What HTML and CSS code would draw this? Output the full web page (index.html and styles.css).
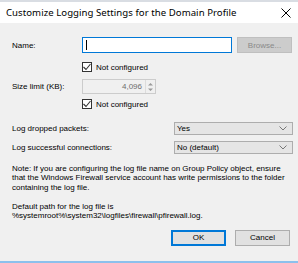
FILE: index.html
```html
<!DOCTYPE html>
<html lang="en">
<head>
    <meta charset="UTF-8">
    <title>Customize Logging Settings</title>
    <link rel="stylesheet" href="styles.css">
</head>
<body>
    <div class="window">
        <div class="top-strip"></div>
        <div class="titlebar">
            <span class="title">Customize Logging Settings for the Domain Profile</span>
            <svg class="close" width="10" height="10" viewBox="0 0 10 10">
                <path d="M0.5 0.5 L9.5 9.5 M9.5 0.5 L0.5 9.5" stroke="#000" stroke-width="1" fill="none"/>
            </svg>
        </div>

        <div class="dialog">
            <!-- Name -->
            <div class="row row-name">
                <label class="label">Name:</label>
                <div class="textbox focused"><span class="caret"></span></div>
                <button class="btn disabled">Browse...</button>
            </div>
            <div class="row row-check">
                <span class="check">
                    <svg width="8" height="8" viewBox="0 0 8 8"><path d="M0.5 4 L3 6.5 L7.5 1" stroke="#333" stroke-width="1.1" fill="none"/></svg>
                </span>
                <span>Not configured</span>
            </div>

            <!-- Size limit -->
            <div class="row row-size">
                <label class="label">Size limit (KB):</label>
                <div class="spinbox">
                    <span class="spin-value">4,096</span>
                    <span class="spin-arrows">
                        <svg width="7" height="12" viewBox="0 0 7 12">
                            <path d="M1 4.5 L3.5 2 L6 4.5 Z M1 7.5 L3.5 10 L6 7.5 Z" fill="#9a9a9a"/>
                        </svg>
                    </span>
                </div>
            </div>
            <div class="row row-check check-two">
                <span class="check">
                    <svg width="8" height="8" viewBox="0 0 8 8"><path d="M0.5 4 L3 6.5 L7.5 1" stroke="#333" stroke-width="1.1" fill="none"/></svg>
                </span>
                <span>Not configured</span>
            </div>

            <!-- Logging options -->
            <div class="row row-combo first-combo">
                <label class="label wide">Log dropped packets:</label>
                <div class="combo">
                    <span>Yes</span>
                    <svg width="8" height="5" viewBox="0 0 8 5"><path d="M0.5 0.5 L4 4 L7.5 0.5" stroke="#777" fill="none"/></svg>
                </div>
            </div>
            <div class="row row-combo">
                <label class="label wide">Log successful connections:</label>
                <div class="combo">
                    <span>No (default)</span>
                    <svg width="8" height="5" viewBox="0 0 8 5"><path d="M0.5 0.5 L4 4 L7.5 0.5" stroke="#777" fill="none"/></svg>
                </div>
            </div>

            <p class="note">Note: If you are configuring the log file name on Group Policy object, ensure that the Windows Firewall service account has write permissions to the folder containing the log file.</p>
            <p class="note path">Default path for the log file is<br>%systemroot%\system32\logfiles\firewall\pfirewall.log.</p>

            <div class="buttons">
                <button class="btn default">OK</button>
                <button class="btn">Cancel</button>
            </div>
        </div>
        <div class="bottom-line"></div>
    </div>
</body>
</html>
```

FILE: styles.css
```css
* {
    margin: 0;
    padding: 0;
    box-sizing: border-box;
}

body {
    font-family: 'Liberation Sans', Arial, sans-serif;
    font-size: 8px;
    color: #000;
    background-color: #f0f0f0;
    width: 298px;
    height: 263px;
    overflow: hidden;
}

.window {
    display: flex;
    flex-direction: column;
    height: 263px;
}

.top-strip {
    height: 2px;
    background-color: #d9dde3;
}

.titlebar {
    height: 21px;
    background-color: white;
    display: flex;
    align-items: center;
    justify-content: space-between;
    padding: 0 7px 0 6px;
}

.title {
    font-family: 'Noto Sans', sans-serif;
    font-size: 9.6px;
    letter-spacing: 0.05px;
}

.dialog {
    flex-grow: 1;
    padding: 14px 5px 0 12px;
}

.row {
    display: flex;
    align-items: center;
}

.label {
    width: 70px;
    flex-shrink: 0;
}

.label.wide {
    width: 162px;
}

.row-name {
    height: 16px;
}

.textbox {
    width: 150px;
    height: 16px;
    background-color: white;
    border: 1px solid #7a7a7a;
    display: flex;
    align-items: center;
    padding-left: 3px;
}

.textbox.focused {
    border-color: #0078d7;
}

.caret {
    width: 1px;
    height: 10px;
    background-color: #000;
}

.btn {
    font-family: 'Liberation Sans', Arial, sans-serif;
    font-size: 8px;
    height: 16px;
    width: 55px;
    background-color: #e1e1e1;
    border: 1px solid #adadad;
    color: #000;
}

.row-name .btn {
    margin-left: 5px;
}

.btn.disabled {
    background-color: #cccccc;
    border-color: #bfbfbf;
    color: #8a8a8a;
}

.btn.default {
    border: 2px solid #0078d7;
}

.row-check {
    margin-top: 9px;
    margin-left: 70px;
    height: 10px;
}

.check-two {
    margin-top: 5px;
}

.check {
    width: 10px;
    height: 10px;
    border: 1px solid #333;
    background-color: white;
    display: flex;
    align-items: center;
    justify-content: center;
    margin-right: 4px;
}

.row-size {
    margin-top: 7px;
    height: 15px;
}

.spinbox {
    width: 74px;
    height: 15px;
    border: 1px solid #cccccc;
    background-color: #f0f0f0;
    display: flex;
    align-items: center;
    justify-content: flex-end;
    color: #6d6d6d;
}

.spin-value {
    margin-right: 3px;
}

.spin-arrows {
    width: 10px;
    height: 13px;
    border-left: 1px solid #dcdcdc;
    display: flex;
    align-items: center;
    justify-content: center;
}

.row-combo {
    margin-top: 6px;
    height: 13px;
}

.first-combo {
    margin-top: 13px;
}

.combo {
    width: 119px;
    height: 13px;
    background-color: #e5e5e5;
    border: 1px solid #adadad;
    display: flex;
    align-items: center;
    justify-content: space-between;
    padding: 0 5px 0 2px;
}

.note {
    margin-top: 9.7px;
    line-height: 9.6px;
    padding-right: 4px;
}

.note.path {
    margin-top: 9.2px;
}

.buttons {
    display: flex;
    justify-content: flex-end;
    gap: 9px;
    margin-top: 9px;
    padding-right: 3px;
}

.bottom-line {
    height: 2px;
    background-color: #8cc0ec;
}
```
